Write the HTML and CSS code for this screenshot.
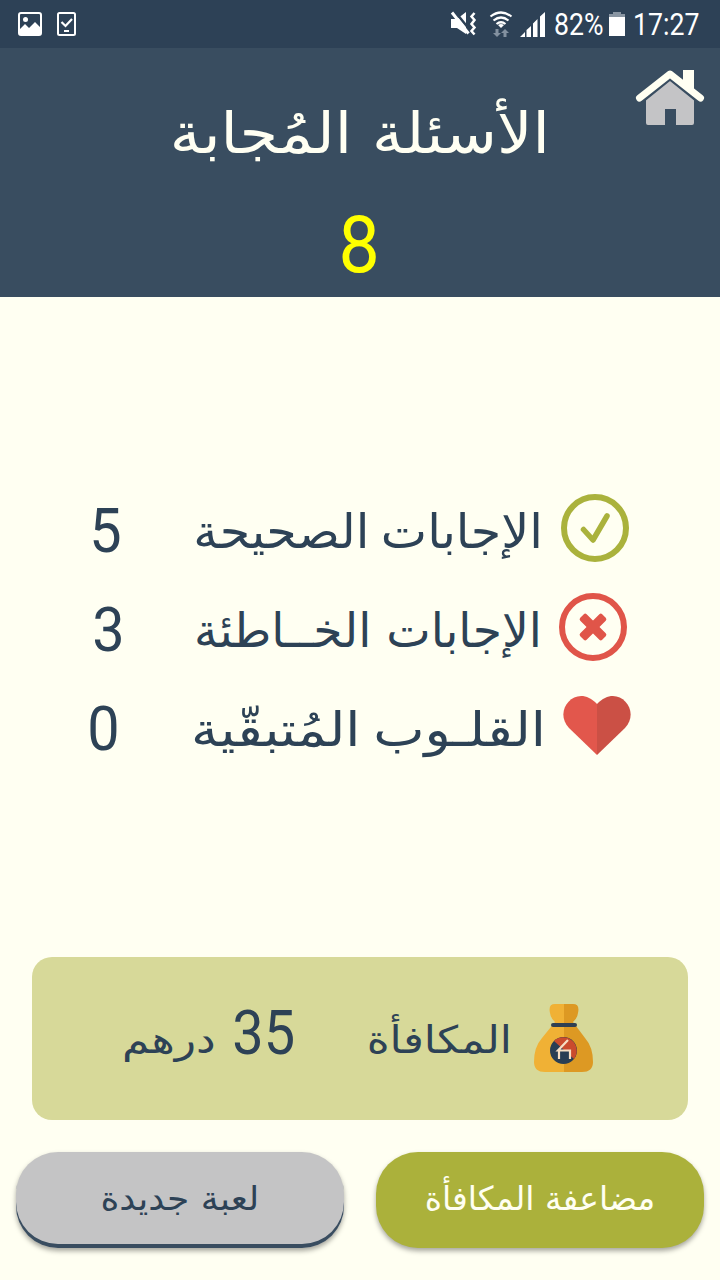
FILE: index.html
```html
<!DOCTYPE html>
<html lang="ar" dir="rtl">

<head>
    <meta charset="UTF-8">
    <meta name="viewport" content="width=device-width, initial-scale=1.0">
    <title>الأسئلة المُجابة</title>
    <link rel="stylesheet" href="styles.css">
</head>

<body>
    <div class="status-bar" dir="ltr">
        <div class="status-left">
            <svg width="24" height="24" viewBox="0 0 24 24">
                <rect x="1" y="1" width="22" height="22" rx="2" fill="none" stroke="#fff" stroke-width="2" />
                <circle cx="7.500" cy="7.500" r="2.500" fill="#fff" />
                <path d="M1 18l6-6 4 4 6-6 6 6v6H1z" fill="#fff" />
            </svg>
            <svg width="19" height="24" viewBox="0 0 19 24">
                <rect x="1" y="1" width="17" height="22" rx="1.500" fill="none" stroke="#fff" stroke-width="2" />
                <path d="M4.500 10l4 4 6.500-7" fill="none" stroke="#fff" stroke-width="2.200" />
                <path d="M7 19h5" stroke="#fff" stroke-width="2" />
            </svg>
        </div>
        <div class="status-right">
            <svg class="mute" width="27" height="26" viewBox="0 0 27 26">
                <path d="M1 8h6l9-7v22l-9-6H1z" fill="#fff" />
                <path d="M4.500 0l17 21" stroke="#2d4156" stroke-width="2.500" />
                <path d="M2 1.500l16.500 21" stroke="#fff" stroke-width="3" />
                <path d="M24.500 2l-3 3.500 3 3.500-3 4 3 3.500-3 3.500 3 3.500" fill="none" stroke="#fff" stroke-width="2.500" />
            </svg>
            <svg class="wifi" width="24" height="26" viewBox="0 0 24 26">
                <g fill="none" stroke="#fff" stroke-width="2.200">
                    <path d="M1.500 5.500q10.500-8 21 0" />
                    <path d="M4.500 9.500q7.500-6 15 0" />
                    <path d="M7.500 13q4.500-3.500 9 0" />
                </g>
                <path d="M9 14q3-2 6 0l-3 3z" fill="#fff" />
                <path d="M6.500 18h3v4h2.500L8 26l-4-4h2.500zM14.500 26h3v-4h2.500l-4-4-4 4h2.500z" fill="#8391a0" />
            </svg>
            <svg class="signal" width="25" height="25" viewBox="0 0 25 25" fill="#fff">
                <path d="M0 25l5-5v5zM6.500 18l4.500-4v11H6.500zM13 11.500l4.500-4.500v18H13zM20 4.500L25 0v25h-5z" />
            </svg>
            <span class="battery-text">82%</span>
            <svg class="battery" width="16" height="24" viewBox="0 0 16 24">
                <path d="M0 5V2h4V0h8v2h4v3z" fill="#8995a2" />
                <path d="M0 5h16v19H0z" fill="#fff" />
            </svg>
            <span class="clock">17:27</span>
        </div>
    </div>

    <header class="header">
        <svg class="home" width="70" height="58" viewBox="0 0 70 58">
            <path d="M11 28L35 10l24 18v25q0 2-2 2H41V39H30v16H13q-2 0-2-2z" fill="#c4c4c6" />
            <path d="M4 29L35 4l31 25" fill="none" stroke="#394d60" stroke-width="11" />
            <path d="M4.500 28L35 4l30.500 24" fill="none" stroke="#fffff2" stroke-width="7" stroke-linejoin="round" stroke-linecap="round" />
            <path d="M48 0h11v24L48 15z" fill="#fffff2" />
        </svg>
        <h1>الأسئلة المُجابة</h1>
        <p class="total">8</p>
    </header>

    <main class="results">
        <div class="row">
            <svg width="68" height="68" viewBox="0 0 68 68" fill="none" stroke="#aab23c">
                <circle cx="34" cy="34" r="31" stroke-width="6" />
                <path d="M22.500 35.500l9.500 10.500 14-24" stroke-width="5.500" stroke-linecap="round" stroke-linejoin="round" />
            </svg>
            <span class="label label-right">الإجابات الصحيحة</span>
            <span class="count">5</span>
        </div>
        <div class="row">
            <svg width="68" height="68" viewBox="0 0 68 68" fill="none" stroke="#e05549">
                <circle cx="34" cy="34" r="31" stroke-width="6" />
                <g fill="#e05549" stroke="none">
                    <rect x="18.500" y="29.500" width="31" height="9" rx="2" transform="rotate(45 34 34)" />
                    <rect x="18.500" y="29.500" width="31" height="9" rx="2" transform="rotate(-45 34 34)" />
                </g>
            </svg>
            <span class="label label-wrong">الإجابات الخــاطئة</span>
            <span class="count">3</span>
        </div>
        <div class="row">
            <svg width="68" height="68" viewBox="0 0 68 68">
                <path d="M34 63L6 36C-11 18 14-10 34 12z" fill="#e2574c" />
                <path d="M34 63l28-27C79 18 54-10 34 12z" fill="#cb5045" />
            </svg>
            <span class="label label-hearts">القلـوب المُتبقّية</span>
            <span class="count">0</span>
        </div>
    </main>

    <section class="reward">
        <svg width="60" height="70" viewBox="0 0 60 70">
            <path d="M30 0H21q-7 0-5 9 1 6 5 9L8 34Q0 43 0 58q0 10 11 10h19z" fill="#f0b135" />
            <path d="M30 0h9q7 0 5 9-1 6-5 9l12 16q8 9 8 24 0 10-11 10H30z" fill="#dd9923" />
            <path d="M19 21h22" stroke="#2f4053" stroke-width="4" stroke-linecap="round" />
            <circle cx="29.500" cy="46.500" r="13.500" fill="#293e54" />
            <path d="M20 37a13.500 13.500 0 0 1 20 18z" fill="#ca4b2d" />
            <path d="M22 46h14v9h-10z" fill="#293e54" />
            <path d="M34 36L24 46.500h12V55M25 46v9" fill="none" stroke="#f6dfc4" stroke-width="2.200" />
        </svg>
        <span class="reward-label">المكافأة</span>
        <span class="reward-value">35</span>
        <span class="reward-unit">درهم</span>
    </section>

    <div class="buttons">
        <button class="double-btn" type="button">مضاعفة المكافأة</button>
        <button class="new-btn" type="button"><span>لعبة جديدة</span></button>
    </div>
</body>

</html>
```
FILE: styles.css
```css
* {
    margin: 0;
    padding: 0;
    box-sizing: border-box;
}

body {
    width: 720px;
    height: 1280px;
    display: flex;
    flex-direction: column;
    background-color: #fffff2;
    color: #2d4256;
    font-family: "DejaVu Sans", sans-serif;
    overflow: hidden;
}

svg {
    display: block;
    flex: none;
}

span,
h1 {
    white-space: nowrap;
}

.status-bar {
    height: 48px;
    display: flex;
    align-items: center;
    justify-content: space-between;
    padding: 0 20px 0 18px;
    background-color: #2d4156;
    color: #fff;
    font-family: Roboto, sans-serif;
    font-size: 31px;
}

.status-left,
.status-right {
    display: flex;
    align-items: center;
}

.status-left {
    gap: 15px;
}

.wifi {
    margin-left: 12px;
}

.signal {
    margin-left: 7px;
}

.battery-text,
.clock {
    transform: scaleX(0.86);
    transform-origin: left;
}

.battery-text {
    width: 48px;
    margin-left: 9px;
    margin-right: 7px;
}

.clock {
    width: 67px;
    margin-left: 8px;
}

.header {
    position: relative;
    height: 249px;
    display: flex;
    flex-direction: column;
    align-items: center;
    background-color: #394d60;
}

.home {
    position: absolute;
    top: 22px;
    right: 15px;
}

h1 {
    height: 144px;
    line-height: 171px;
    font-size: 57px;
    font-weight: normal;
    color: #fffff2;
    transform: scaleX(1.093);
}

.total {
    height: 100px;
    line-height: 106px;
    margin-right: 2px;
    font-family: Roboto, sans-serif;
    font-size: 79px;
    color: #ffff00;
    transform: scaleX(0.93);
}

.results {
    height: 660px;
    display: flex;
    flex-direction: column;
    align-items: center;
    justify-content: center;
    gap: 31px;
}

.row {
    display: flex;
    align-items: center;
}

.label {
    margin-right: 17px;
    padding-top: 6px;
    font-size: 47px;
    transform-origin: right;
}

.label-right {
    width: 348px;
    margin-right: 18px;
    word-spacing: -4px;
    transform: scaleX(1.047);
}

.label-wrong {
    width: 344px;
    transform: scaleX(1.005);
}

.label-hearts {
    width: 353px;
    word-spacing: -4px;
    transform: scaleX(1.16);
}

.count {
    width: 35px;
    margin-right: 72px;
    margin-left: -3px;
    padding-top: 5px;
    font-family: Roboto, sans-serif;
    font-size: 62px;
    line-height: 62px;
    transform: scaleX(0.93);
}

.reward {
    height: 163px;
    margin: 0 32px;
    display: flex;
    align-items: center;
    padding-right: 94px;
    border-radius: 20px;
    background-color: #d7d999;
    font-size: 38px;
}

.reward-label {
    width: 145px;
    margin-right: 22px;
    padding-top: 3px;
    transform: scaleX(1.15);
    transform-origin: right;
}

.reward-value {
    width: 70px;
    margin-right: 72px;
    padding-bottom: 12px;
    font-family: Roboto, sans-serif;
    font-size: 62px;
    transform: scaleX(0.9);
    transform-origin: right;
}

.reward-unit {
    margin-right: 9px;
    padding-top: 3px;
    transform: scaleX(1.16);
    transform-origin: right;
}

.buttons {
    display: flex;
    gap: 32px;
    padding: 32px 16px;
}

.buttons button {
    flex: 1;
    height: 96px;
    padding-bottom: 4px;
    border: none;
    border-radius: 42px;
    box-shadow: 0 3px 5px rgba(0, 0, 0, 0.35);
    font-family: "DejaVu Sans", sans-serif;
    font-size: 33px;
}

.double-btn {
    background-color: #abb13b;
    color: #fffff2;
}

.buttons .new-btn {
    background-color: #c4c4c5;
    box-shadow: inset 0 -4px 0 #394d60, 0 3px 5px rgba(0, 0, 0, 0.35);
    color: #2d4256;
}

.new-btn span {
    display: inline-block;
    transform: scaleX(1.09);
}
```
